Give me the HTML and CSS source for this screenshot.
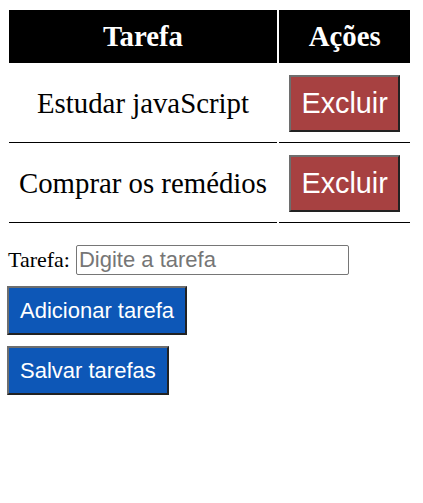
FILE: index.html
```html
<!DOCTYPE html>
<html lang="pt-BR">
<head>
<meta charset="utf-8">
<title>Tarefas</title>
<link rel="stylesheet" href="styles.css">
</head>
<body>
<table class="tasks">
  <thead>
    <tr><th>Tarefa</th><th>Ações</th></tr>
  </thead>
  <tbody>
    <tr><td>Estudar javaScript</td><td><button class="btn btn-del">Excluir</button></td></tr>
    <tr><td>Comprar os remédios</td><td><button class="btn btn-del">Excluir</button></td></tr>
  </tbody>
</table>
<div class="form">
  <label class="field"><span class="label">Tarefa:</span><input class="input" type="text" placeholder="Digite a tarefa"></label>
  <button class="btn btn-blue">Adicionar tarefa</button>
  <button class="btn btn-blue">Salvar tarefas</button>
</div>
</body>
</html>
```
FILE: styles.css
```css
html, body { background: #fff; }
body {
  margin: 8px 7px;
  font-family: "Liberation Serif", "Times New Roman", serif;
  color: #000;
}
.tasks {
  border-collapse: separate;
  border-spacing: 2px;
  font-size: 28.8px;
  margin: 0;
}
.tasks th {
  background: #000;
  color: #fff;
  font-weight: bold;
  padding: 10px;
  line-height: 33px;
  text-align: center;
}
.tasks td {
  padding: 10px;
  border-bottom: 1px solid #000;
  text-align: center;
  line-height: 33px;
}
.btn {
  font-family: "Liberation Sans", Arial, sans-serif;
  color: #fff;
  border: 2px solid;
  border-color: #6e6e6e #222 #222 #6e6e6e;
  cursor: pointer;
  margin: 0;
}
.btn-del {
  background: #a74141;
  font-size: 28.8px;
  line-height: 33px;
  padding: 10px 10.5px;
  vertical-align: middle;
}
.form {
  display: flex;
  flex-direction: column;
  align-items: flex-start;
  gap: 11px;
  margin-top: 20px;
}
.field {
  display: flex;
  align-items: center;
  gap: 6px;
  padding-left: 1px;
}
.label {
  font-size: 22px;
}
.input {
  box-sizing: border-box;
  width: 273px;
  height: 30px;
  margin: 0;
  padding: 1px 2px;
  border: 1px solid #767676;
  border-radius: 2px;
  font-family: "Liberation Sans", Arial, sans-serif;
  font-size: 22px;
}
.input::placeholder { color: #767676; }
.btn-blue {
  background: #0d57b7;
  font-size: 22px;
  line-height: 25px;
  padding: 10px 11px;
}
```
